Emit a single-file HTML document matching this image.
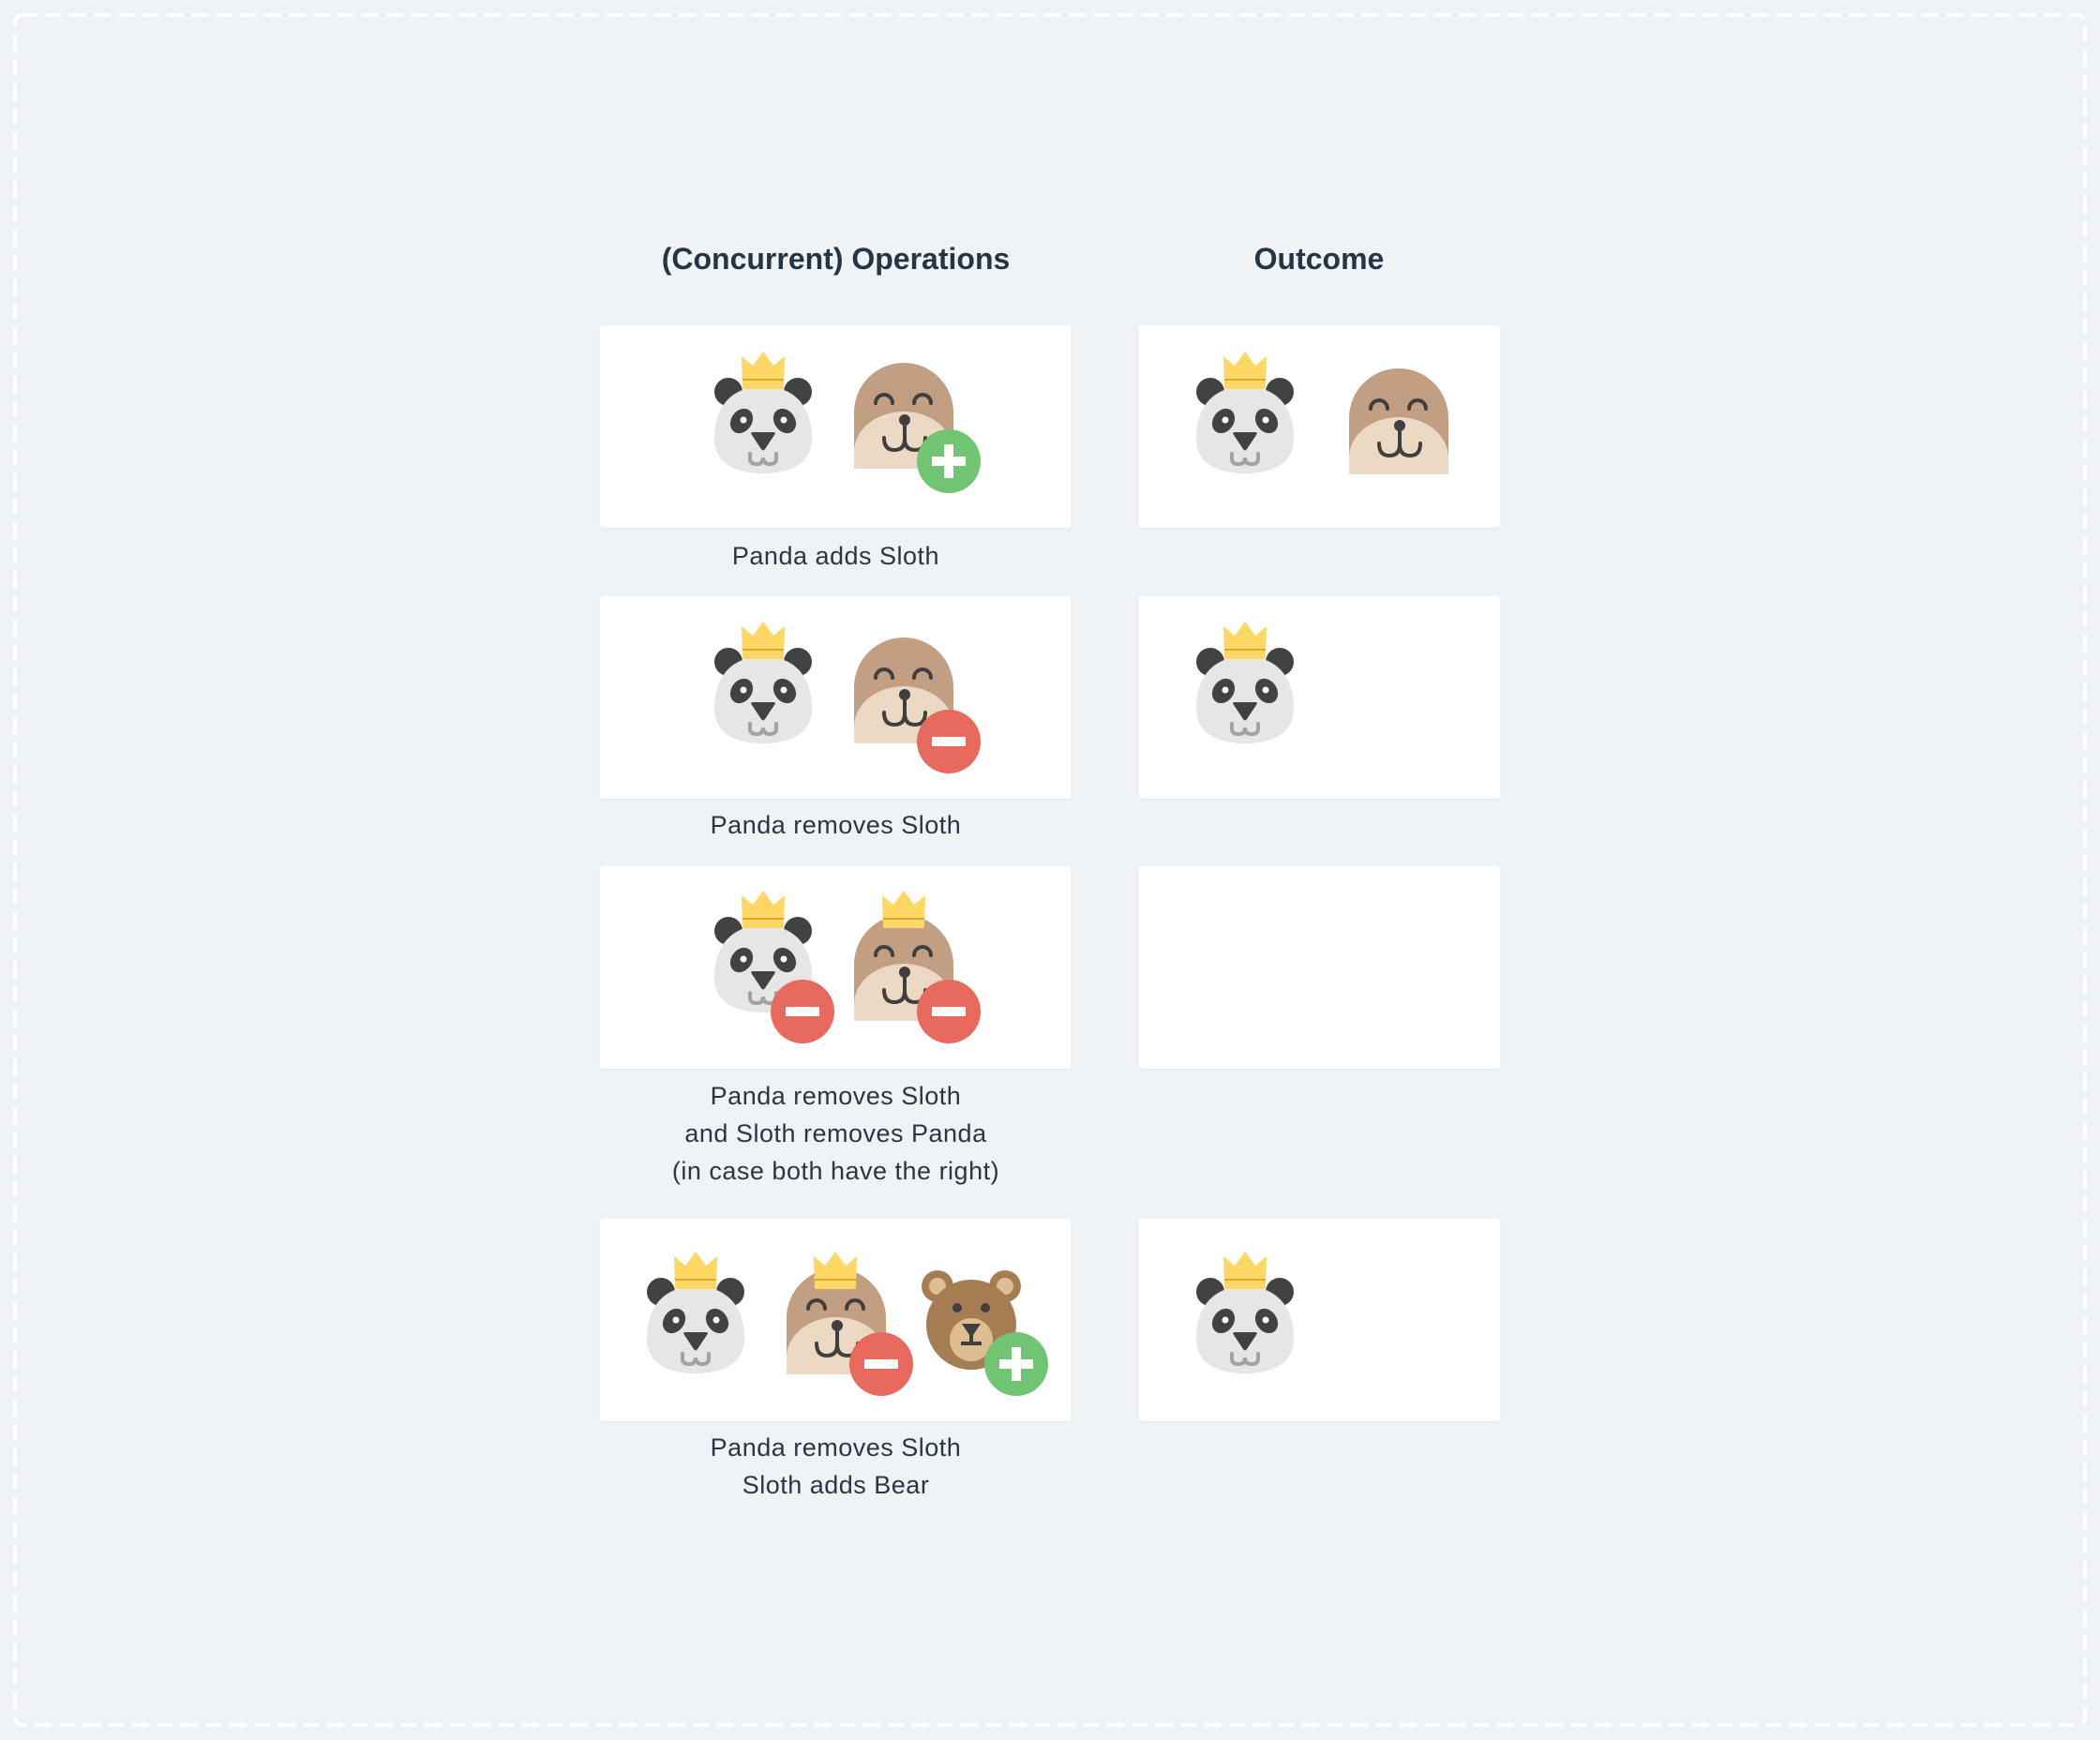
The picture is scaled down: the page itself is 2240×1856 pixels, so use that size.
<!DOCTYPE html>
<html><head><meta charset="utf-8"><style>
html,body{margin:0;padding:0}
body{width:2240px;height:1856px;background:#eff3f6;position:relative;overflow:hidden;font-family:"Liberation Sans",sans-serif;color:#263545}
.card{position:absolute;background:#fff;border-radius:4px;box-shadow:0 1px 3px rgba(0,0,0,0.05)}
.h{position:absolute;font-weight:bold;font-size:32px;text-align:center;top:256px;line-height:40px}
.lbl{position:absolute;left:640px;width:503px;text-align:center;font-size:27px;line-height:40px;letter-spacing:0.5px;color:#2a3644}
svg.ov{position:absolute;left:0;top:0}
</style></head><body>
<div class="card" style="left:640px;top:347px;width:503px;height:216px"></div>
<div class="card" style="left:1214px;top:347px;width:386px;height:216px"></div>
<div class="card" style="left:640px;top:636px;width:503px;height:216px"></div>
<div class="card" style="left:1214px;top:636px;width:386px;height:216px"></div>
<div class="card" style="left:640px;top:924px;width:503px;height:216px"></div>
<div class="card" style="left:1214px;top:924px;width:386px;height:216px"></div>
<div class="card" style="left:640px;top:1300px;width:503px;height:216px"></div>
<div class="card" style="left:1214px;top:1300px;width:386px;height:216px"></div>

<div class="h" style="left:640px;width:503px">(Concurrent) Operations</div>
<div class="h" style="left:1214px;width:386px">Outcome</div>

<div class="lbl" style="top:573px">Panda adds Sloth</div>
<div class="lbl" style="top:860px">Panda removes Sloth</div>
<div class="lbl" style="top:1149px">Panda removes Sloth<br>and Sloth removes Panda<br>(in case both have the right)</div>
<div class="lbl" style="top:1524px">Panda removes Sloth<br>Sloth adds Bear</div>

<svg class="ov" width="2240" height="1856" viewBox="0 0 2240 1856">
<defs>
<g id="crown"><path d="M0,5 L12,15 L23,0 L34,15 L46,5 L45,38 Q45,40 43,40 L3,40 Q1,40 1,38Z" fill="#ffd764"/><path d="M1,30 H45" stroke="#d9a92e" stroke-width="2"/></g>
<g id="panda">
<circle cx="15" cy="43" r="15" fill="#424242"/><circle cx="89" cy="43" r="15" fill="#424242"/>
<path d="M0,93 C0,55 22,37 52,37 C82,37 104,55 104,93 C104,120 80,130 52,130 C24,130 0,120 0,93Z" fill="#e6e6e6"/>
<ellipse cx="29" cy="74" rx="11" ry="14" transform="rotate(35 29 74)" fill="#424242"/>
<ellipse cx="75" cy="74" rx="11" ry="14" transform="rotate(-35 75 74)" fill="#424242"/>
<circle cx="31" cy="73" r="3.5" fill="#fff"/><circle cx="74" cy="73" r="3.5" fill="#fff"/>
<path d="M41,86 H63 Q66,86 64,89 L54,104 Q52,107 50,104 L40,89 Q38,86 41,86Z" fill="#424242"/>
<path d="M38,109 v5 q0,6 7,6 q7,0 7,-7 q0,7 7,7 q7,0 7,-6 v-5" fill="none" stroke="#a3a3a3" stroke-width="4" stroke-linecap="round"/>
<use href="#crown" x="29" y="0"/>
</g>
<g id="sloth">
<path d="M0,53 A53,53 0 0 1 106,53 V111 Q106,113 104,113 H2 Q0,113 0,111Z" fill="#c29f82"/>
<path d="M0,113 V96 C0,70 25,52 53,52 C81,52 106,70 106,96 V111 Q106,113 104,113 H2 Q0,113 0,111Z" fill="#ebd9c4"/>
<path d="M23,43 A9,9 0 0 1 41,43 M64,43 A9,9 0 0 1 82,43" fill="none" stroke="#3f3f3f" stroke-width="4" stroke-linecap="round"/>
<circle cx="54" cy="61" r="6" fill="#3f3f3f"/>
<path d="M32,80 q0,13 11,13 q11,0 11,-12 M54,63 v18 q0,12 11,12 q11,0 11,-13" fill="none" stroke="#3f3f3f" stroke-width="4" stroke-linecap="round"/>
</g>
<g id="bear">
<circle cx="17" cy="18" r="17" fill="#a67c52"/><circle cx="89" cy="18" r="17" fill="#a67c52"/>
<circle cx="17" cy="18" r="9" fill="#dfbd93"/><circle cx="89" cy="18" r="9" fill="#dfbd93"/>
<circle cx="53" cy="59" r="48" fill="#a67c52"/>
<circle cx="53" cy="75" r="23" fill="#dfbd93"/>
<circle cx="38" cy="41" r="5" fill="#3f3f3f"/><circle cx="68" cy="41" r="5" fill="#3f3f3f"/>
<path d="M43,58 H63 L55,70 V77 H64 V81 H42 V77 H51 V70Z" fill="#3f3f3f"/>
</g>
<g id="plus"><circle r="34" fill="#71c472"/><rect x="-18" y="-5" width="36" height="10" fill="#fff"/><rect x="-5" y="-18" width="10" height="36" fill="#fff"/></g>
<g id="minus"><circle r="34" fill="#e8695d"/><rect x="-18" y="-5" width="36" height="10" fill="#fff"/></g>
</defs>
<rect x="16" y="16" width="2208" height="1824" rx="8" fill="none" stroke="#fff" stroke-width="4" stroke-dasharray="14 12" stroke-linecap="round"/>

<!-- row1 -->
<use href="#panda" x="762" y="375"/>
<use href="#sloth" x="911" y="387"/>
<use href="#plus" x="1012" y="492"/>
<use href="#panda" x="1276" y="375"/>
<use href="#sloth" x="1439" y="393"/>
<!-- row2 -->
<use href="#panda" x="762" y="663"/>
<use href="#sloth" x="911" y="680"/>
<use href="#minus" x="1012" y="791"/>
<use href="#panda" x="1276" y="663"/>
<!-- row3 -->
<use href="#panda" x="762" y="950"/>
<use href="#sloth" x="911" y="976"/>
<use href="#crown" x="941" y="950"/>
<use href="#minus" x="856" y="1079"/>
<use href="#minus" x="1012" y="1079"/>
<!-- row4 -->
<use href="#panda" x="690" y="1335"/>
<use href="#sloth" x="839" y="1353"/>
<use href="#crown" x="868" y="1335"/>
<use href="#minus" x="940" y="1455"/>
<use href="#bear" x="983" y="1354"/>
<use href="#plus" x="1084" y="1455"/>
<use href="#panda" x="1276" y="1335"/>
</svg>
</body></html>
